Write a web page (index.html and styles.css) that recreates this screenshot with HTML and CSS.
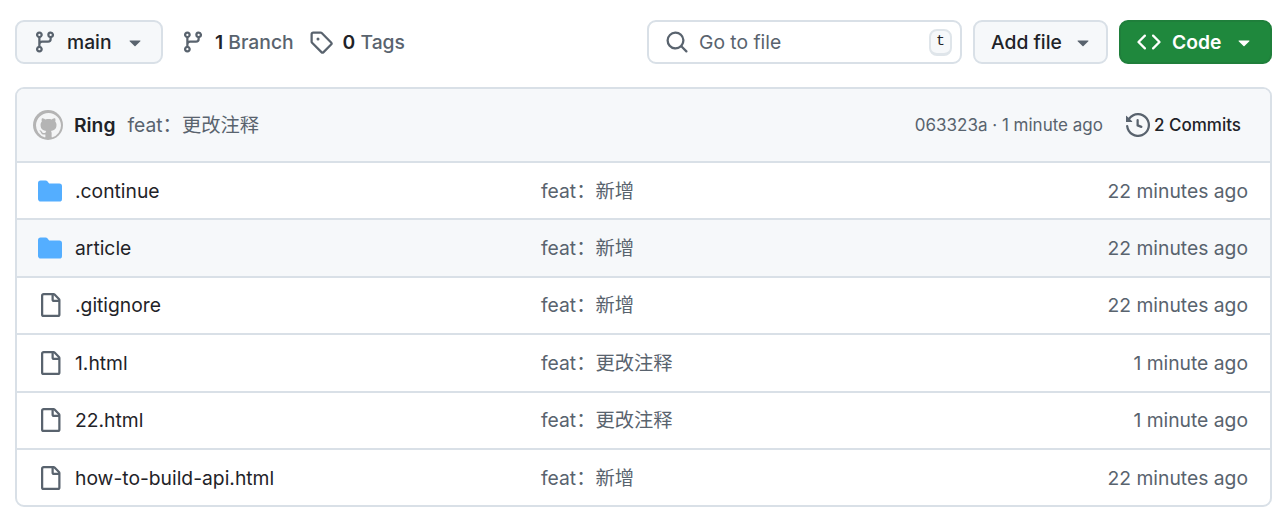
FILE: index.html
```html
<!DOCTYPE html>
<html lang="en">
<head>
<meta charset="utf-8">
<title>Repository files</title>
<link rel="stylesheet" href="styles.css">
</head>
<body>
<svg class="defs" aria-hidden="true">
  <symbol id="i-branch" viewBox="0 0 16 16"><path d="M9.5 3.25a2.25 2.25 0 1 1 3 2.122V6A2.5 2.5 0 0 1 10 8.5H6a1 1 0 0 0-1 1v1.128a2.251 2.251 0 1 1-1.5 0V5.372a2.25 2.25 0 1 1 1.5 0v1.836A2.493 2.493 0 0 1 6 7h4a1 1 0 0 0 1-1v-.628A2.25 2.25 0 0 1 9.5 3.25Zm-6 0a.75.75 0 1 0 1.5 0 .75.75 0 0 0-1.5 0Zm8.25-.75a.75.75 0 1 0 0 1.5.75.75 0 0 0 0-1.5ZM4.25 12a.75.75 0 1 0 0 1.5.75.75 0 0 0 0-1.5Z"/></symbol>
  <symbol id="i-tag" viewBox="0 0 16 16"><path d="M1 7.775V2.75C1 1.784 1.784 1 2.75 1h5.025c.464 0 .91.184 1.238.513l6.25 6.25a1.75 1.75 0 0 1 0 2.474l-5.026 5.026a1.75 1.75 0 0 1-2.474 0l-6.25-6.25A1.752 1.752 0 0 1 1 7.775Zm1.5 0c0 .066.026.13.073.177l6.25 6.25a.25.25 0 0 0 .354 0l5.025-5.025a.25.25 0 0 0 0-.354l-6.25-6.25a.25.25 0 0 0-.177-.073H2.75a.25.25 0 0 0-.25.25ZM6 5a1 1 0 1 1 0 2 1 1 0 0 1 0-2Z"/></symbol>
  <symbol id="i-search" viewBox="0 0 16 16"><path d="M10.68 11.74a6 6 0 0 1-7.922-8.982 6 6 0 0 1 8.982 7.922l3.04 3.04a.749.749 0 0 1-.326 1.275.749.749 0 0 1-.734-.215ZM11.5 7a4.499 4.499 0 1 0-8.997 0A4.499 4.499 0 0 0 11.5 7Z"/></symbol>
  <symbol id="i-code" viewBox="0 0 16 16"><path d="m11.28 3.22 4.25 4.25a.75.75 0 0 1 0 1.06l-4.25 4.25a.749.749 0 0 1-1.275-.326.749.749 0 0 1 .215-.734L13.94 8l-3.72-3.72a.749.749 0 0 1 .326-1.275.749.749 0 0 1 .734.215Zm-6.56 0a.751.751 0 0 1 1.042.018.751.751 0 0 1 .018 1.042L2.06 8l3.72 3.72a.749.749 0 0 1-.326 1.275.749.749 0 0 1-.734-.215L.47 8.53a.75.75 0 0 1 0-1.06Z"/></symbol>
  <symbol id="i-history" viewBox="0 0 16 16"><path d="m.427 1.927 1.215 1.215a8.002 8.002 0 1 1-1.6 5.685.75.75 0 1 1 1.493-.154 6.5 6.5 0 1 0 1.18-4.458l1.358 1.358A.25.25 0 0 1 3.896 6H.25A.25.25 0 0 1 0 5.75V2.104a.25.25 0 0 1 .427-.177ZM7.75 4a.75.75 0 0 1 .75.75v2.992l2.028.812a.75.75 0 0 1-.557 1.392l-2.5-1A.751.751 0 0 1 7 8.25v-3.5A.75.75 0 0 1 7.75 4Z"/></symbol>
  <symbol id="i-file" viewBox="0 0 16 16"><path d="M2 1.75C2 .784 2.784 0 3.75 0h6.586c.464 0 .909.184 1.237.513l2.914 2.914c.329.328.513.773.513 1.237v9.586A1.75 1.75 0 0 1 13.25 16h-9.5A1.75 1.75 0 0 1 2 14.25Zm1.75-.25a.25.25 0 0 0-.25.25v12.5c0 .138.112.25.25.25h9.5a.25.25 0 0 0 .25-.25V6h-2.75A1.75 1.75 0 0 1 9 4.25V1.5Zm6.75.062V4.25c0 .138.112.25.25.25h2.688l-.011-.013-2.914-2.914-.013-.011Z"/></symbol>
  <symbol id="i-dir" viewBox="0 0 16 16"><path d="M1.75 1A1.75 1.75 0 0 0 0 2.75v10.5C0 14.216.784 15 1.75 15h12.5A1.75 1.75 0 0 0 16 13.25v-8.5A1.75 1.75 0 0 0 14.25 3H7.5a.25.25 0 0 1-.2-.1l-.9-1.2C6.07 1.26 5.55 1 5 1H1.75Z"/></symbol>
  <symbol id="i-caret" viewBox="0 0 16 16"><path d="m4.427 7.427 3.396 3.396a.25.25 0 0 0 .354 0l3.396-3.396A.25.25 0 0 0 11.396 7H4.604a.25.25 0 0 0-.177.427Z"/></symbol>
  <symbol id="i-mark" viewBox="0 0 16 16"><path d="M8 0c4.42 0 8 3.58 8 8a8.013 8.013 0 0 1-5.45 7.59c-.4.08-.55-.17-.55-.38 0-.27.01-1.13.01-2.2 0-.75-.25-1.23-.54-1.48 1.78-.2 3.65-.88 3.65-3.95 0-.88-.31-1.59-.82-2.15.08-.2.36-1.02-.08-2.12 0 0-.67-.22-2.2.82-.64-.18-1.32-.27-2-.27-.68 0-1.36.09-2 .27-1.53-1.03-2.2-.82-2.2-.82-.44 1.1-.16 1.92-.08 2.12-.51.56-.82 1.28-.82 2.15 0 3.06 1.86 3.75 3.64 3.95-.23.2-.44.55-.51 1.07-.46.21-1.61.55-2.33-.66-.15-.24-.6-.83-1.23-.82-.67.01-.27.38.01.53.34.19.73.9.82 1.13.16.45.68 1.31 2.69.94 0 .67.01 1.3.01 1.49 0 .21-.15.45-.55.38A7.995 7.995 0 0 1 0 8c0-4.42 3.58-8 8-8Z"/></symbol>
</svg>
<main class="page">
  <div class="toolbar">
    <button class="btn btn-branch">
      <svg class="icon muted"><use href="#i-branch"/></svg>
      <span class="btn-label">main</span>
      <svg class="icon muted caret"><use href="#i-caret"/></svg>
    </button>
    <a class="stat stat-branch">
      <svg class="icon muted"><use href="#i-branch"/></svg>
      <span class="stat-text"><b>1</b> Branch</span>
    </a>
    <a class="stat stat-tag">
      <svg class="icon muted"><use href="#i-tag"/></svg>
      <span class="stat-text"><b>0</b> Tags</span>
    </a>
    <div class="spacer"></div>
    <div class="search">
      <svg class="icon muted"><use href="#i-search"/></svg>
      <span class="search-text">Go to file</span>
      <kbd class="key">t</kbd>
    </div>
    <button class="btn btn-add">
      <span class="btn-label">Add file</span>
      <svg class="icon muted caret"><use href="#i-caret"/></svg>
    </button>
    <button class="btn btn-code">
      <svg class="icon white"><use href="#i-code"/></svg>
      <span class="btn-label">Code</span>
      <svg class="icon white caret"><use href="#i-caret"/></svg>
    </button>
  </div>

  <section class="files">
    <header class="commit">
      <span class="avatar"><svg class="avatar-mark"><use href="#i-mark"/></svg></span>
      <b class="author">Ring</b>
      <span class="message">feat：更改注释</span>
      <span class="spacer"></span>
      <span class="meta">063323a · 1 minute ago</span>
      <span class="commits">
        <svg class="icon muted"><use href="#i-history"/></svg>
        <span>2 Commits</span>
      </span>
    </header>
    <div class="row">
      <span class="name"><svg class="icon folder"><use href="#i-dir"/></svg><span>.continue</span></span>
      <span class="msg">feat：新增</span>
      <span class="age">22 minutes ago</span>
    </div>
    <div class="row row-hover">
      <span class="name"><svg class="icon folder"><use href="#i-dir"/></svg><span>article</span></span>
      <span class="msg">feat：新增</span>
      <span class="age">22 minutes ago</span>
    </div>
    <div class="row">
      <span class="name"><svg class="icon muted"><use href="#i-file"/></svg><span>.gitignore</span></span>
      <span class="msg">feat：新增</span>
      <span class="age">22 minutes ago</span>
    </div>
    <div class="row">
      <span class="name"><svg class="icon muted"><use href="#i-file"/></svg><span>1.html</span></span>
      <span class="msg">feat：更改注释</span>
      <span class="age">1 minute ago</span>
    </div>
    <div class="row">
      <span class="name"><svg class="icon muted"><use href="#i-file"/></svg><span>22.html</span></span>
      <span class="msg">feat：更改注释</span>
      <span class="age">1 minute ago</span>
    </div>
    <div class="row">
      <span class="name"><svg class="icon muted"><use href="#i-file"/></svg><span>how-to-build-api.html</span></span>
      <span class="msg">feat：新增</span>
      <span class="age">22 minutes ago</span>
    </div>
  </section>
</main>
</body>
</html>
```

FILE: styles.css
```css
* { box-sizing: border-box; }
html, body { margin: 0; padding: 0; background: #fff; }
body {
  font-family: Inter, "Noto Sans CJK SC", sans-serif;
  font-size: 19.3px;
  line-height: 24px;
  color: #1f2328;
  overflow: hidden;
}
.defs { position: absolute; width: 0; height: 0; }
.page { padding: 20px 8px 0 15px; }
.icon { width: 24px; height: 24px; flex: none; fill: currentColor; }
.muted { color: #59636e; }
.white { color: #fff; }
.folder { color: #54aeff; }
.spacer { flex: 1; }

.toolbar { display: flex; align-items: center; height: 44px; }
.btn {
  display: flex;
  align-items: center;
  height: 44px;
  border: 2px solid #d9e0e7;
  border-radius: 9px;
  background: #f6f8fa;
  font: 500 19.3px/24px Inter, sans-serif;
  color: #1f2328;
  padding: 0;
}
.btn-branch { width: 148px; padding-left: 16px; }
.btn-branch .btn-label { margin-left: 10px; }
.btn-branch .caret { margin-left: 11px; }
.stat { display: flex; align-items: center; }
.stat-branch { margin-left: 18px; }
.stat-tag { margin-left: 15px; }
.stat-text { margin-left: 10px; color: #59636e; font-weight: 500; }
.stat-text b { color: #1f2328; font-weight: 600; }
.search {
  display: flex;
  align-items: center;
  width: 315px;
  height: 44px;
  padding: 0 8px 0 16px;
  border: 2px solid #d9e0e7;
  border-radius: 9px;
  color: #59636e;
}
.search-text { margin-left: 10px; flex: 1; }
.key {
  width: 23px;
  height: 27px;
  display: flex;
  align-items: center;
  justify-content: center;
  font: 15px "Liberation Mono", monospace;
  color: #1f2328;
  background: #f6f8fa;
  border: 2px solid #dfe5ea;
  border-bottom-width: 3px;
  border-radius: 8px;
}
.btn-add { width: 135px; margin-left: 11px; padding-left: 16px; }
.btn-add .caret { margin-left: 9px; }
.btn-code {
  width: 153px;
  margin-left: 11px;
  padding-left: 16px;
  background: #1f883d;
  border-color: #1f7f3b;
  color: #fff;
}
.btn-code .btn-label { margin-left: 11px; font-weight: 600; }
.btn-code .caret { margin-left: 11px; }

.files {
  margin-top: 23px;
  width: 1257px;
  border: 2px solid #d9e0e7;
  border-radius: 9px;
  overflow: hidden;
}
.commit {
  display: flex;
  align-items: center;
  height: 72px;
  padding-left: 16px;
  background: #f6f8fa;
}
.avatar {
  width: 30px;
  height: 30px;
  border-radius: 50%;
  background: #b4b4b4;
  display: flex;
  align-items: center;
  justify-content: center;
}
.avatar-mark { width: 25px; height: 25px; fill: #f4f5f6; }
.author { margin-left: 11px; font-weight: 600; }
.message { margin-left: 12px; color: #59636e; }
.meta { font-size: 17px; color: #59636e; }
.commits {
  display: flex;
  align-items: center;
  gap: 4px;
  margin: 0 29px 0 23px;
  font-size: 17px;
  font-weight: 500;
}
.row {
  display: grid;
  grid-template-columns: 503px 1fr auto;
  align-items: center;
  height: 57.4px;
  padding: 0 22px 0 21px;
  border-top: 2px solid #d9e0e7;
}
.row-hover { background: #f6f8fa; }
.name { display: flex; align-items: center; gap: 13px; }
.msg { color: #59636e; }
.age { color: #59636e; text-align: right; }
```
